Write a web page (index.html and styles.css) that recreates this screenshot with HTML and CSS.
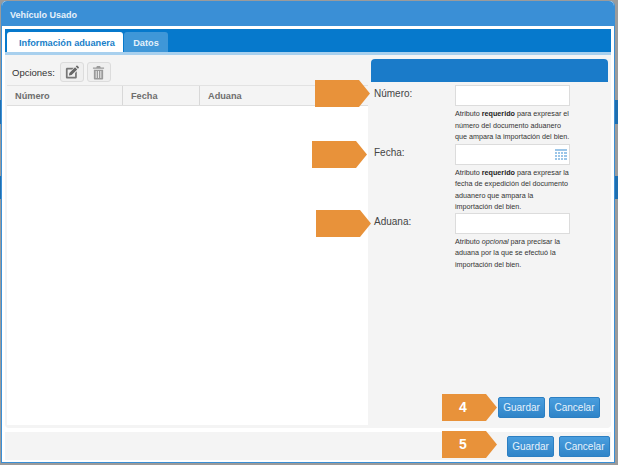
FILE: index.html
```html
<!DOCTYPE html>
<html lang="es">
<head>
<meta charset="utf-8">
<title>Vehículo Usado</title>
<link rel="stylesheet" href="styles.css">
</head>
<body>
<div class="modal">
  <header class="modal-head">Vehículo Usado</header>
  <div class="modal-body">
    <nav class="tabs">
      <span class="tab tab-on">Información aduanera</span>
      <span class="tab tab-off">Datos</span>
    </nav>
    <div class="tab-strip"></div>
    <div class="panel">
      <section class="left">
        <div class="tools">
          <span class="tools-label">Opciones:</span>
          <span class="tool-btn">
            <svg width="14" height="14" viewBox="0 0 16 16"><path fill="#777" d="M2.500 3H10L8 5H3v8.500h8.500V9l2-2v7c0 .8-.7 1.500-1.500 1.500H2.500C1.700 15.500 1 14.800 1 14V4.500C1 3.700 1.700 3 2.500 3z"/><path fill="#666" d="M5 9 11.500 2.500l2.500 2.500L7.500 11.500 4.500 12zM12.300 1.700l.9-.9c.3-.3.7-.3 1 0l1.500 1.500c.3.3.3.7 0 1l-.9.9z"/></svg>
          </span>
          <span class="tool-btn">
            <svg width="13" height="15" viewBox="0 0 14 16"><path fill="#9a9a9a" d="M1 2.500h3.600L5.300 1h3.400l.7 1.500H13V4H1zM2 5h10v9.600c0 .5-.4.9-.9.9H2.900c-.5 0-.9-.4-.9-.9zm2 1.500v7.500h1V6.500zm2.500 0v7.500h1V6.500zm2.500 0v7.500h1V6.500z"/></svg>
          </span>
        </div>
        <div class="grid-head">
          <span class="col col-num">Número</span>
          <span class="col col-date">Fecha</span>
          <span class="col col-cust">Aduana</span>
        </div>
        <div class="grid-body"></div>
      </section>
      <section class="right">
        <div class="form-head"></div>
        <div class="form-row row-num">
          <label class="form-label">Número:</label>
          <div class="form-field">
            <div class="input"></div>
            <p class="hint">Atributo <b>requerido</b> para expresar el<br>número del documento aduanero<br>que ampara la importación del bien.</p>
          </div>
        </div>
        <div class="form-row row-date">
          <label class="form-label">Fecha:</label>
          <div class="form-field">
            <div class="input input-date">
              <svg width="12" height="11" viewBox="0 0 12 11"><path fill="#9cc6e8" d="M0 0h12v2H0zM0 3h2v2H0zM3 3h2v2H3zM6 3h2v2H6zM9 3h3v2H9zM0 6h2v2H0zM3 6h2v2H3zM6 6h2v2H6zM9 6h3v2H9zM0 9h2v2H0zM3 9h2v2H3zM6 9h2v2H6zM9 9h3v2H9z"/></svg>
            </div>
            <p class="hint">Atributo <b>requerido</b> para expresar la<br>fecha de expedición del documento<br>aduanero que ampara la<br>importación del bien.</p>
          </div>
        </div>
        <div class="form-row row-cust">
          <label class="form-label">Aduana:</label>
          <div class="form-field">
            <div class="input"></div>
            <p class="hint">Atributo <i>opcional</i> para precisar la<br>aduana por la que se efectuó la<br>importación del bien.</p>
          </div>
        </div>
        <div class="actions">
          <button class="btn">Guardar</button>
          <button class="btn">Cancelar</button>
        </div>
      </section>
    </div>
    <footer class="foot">
      <button class="btn">Guardar</button>
      <button class="btn">Cancelar</button>
    </footer>
  </div>
  <span class="arrow a1"></span>
  <span class="arrow a2"></span>
  <span class="arrow a3"></span>
  <span class="arrow a4">4</span>
  <span class="arrow a5">5</span>
</div>
</body>
</html>
```
FILE: styles.css
```css
* { box-sizing: border-box; }
html, body { margin: 0; height: 100%; }
body {
  width: 618px;
  height: 465px;
  overflow: hidden;
  background: linear-gradient(#9b9b9b 100px, #1f6fb0 100px, #1f6fb0 124px, #9b9b9b 124px, #9b9b9b 176px, #1f6fb0 176px, #1f6fb0 199px, #9b9b9b 199px);
  font-family: "Liberation Sans", Arial, sans-serif;
  padding: 1px 3px 2px 1px;
}
.modal {
  position: relative;
  height: 462px;
  display: flex;
  flex-direction: column;
  background: #fff;
  border: 1px solid #3a8fd6;
  border-top: 0;
  border-radius: 5px 5px 0 0;
}
.modal-head {
  height: 25px;
  flex: none;
  background: #3a8fd6;
  color: #e6f1fa;
  font-size: 9px;
  font-weight: bold;
  line-height: 28px;
  padding-left: 8px;
  border-radius: 5px 5px 0 0;
}
.modal-body {
  flex: 1;
  display: flex;
  flex-direction: column;
  padding: 3px 3px 2px 3px;
  min-height: 0;
}
.tabs {
  height: 23px;
  flex: none;
  display: flex;
  gap: 1px;
  padding: 3px 0 0 2px;
  background: #0679cc;
}
.tab {
  font-size: 9.2px;
  font-weight: bold;
  line-height: 22px;
  border-radius: 3px 3px 0 0;
}
.tab-on {
  width: 116px;
  background: #fff;
  color: #1a7fc9;
  padding-left: 12px;
}
.tab-off {
  width: 44px;
  background: #3f97d8;
  color: #e4f1fa;
  text-align: center;
}
.tab-strip { height: 3px; flex: none; background: #a8d0ee; }
.panel {
  flex: 1;
  display: flex;
  min-height: 0;
  background: #f4f4f4;
  border-radius: 0 0 4px 4px;
}
.left {
  width: 363px;
  flex: none;
  display: flex;
  flex-direction: column;
  padding: 0 0 3px 2px;
}
.tools {
  height: 30px;
  flex: none;
  display: flex;
  align-items: center;
  gap: 3px;
  padding: 4px 0 0 5px;
  font-size: 9.5px;
  color: #333;
}
.tools-label { margin-right: 2px; }
.tool-btn {
  width: 24px;
  height: 20px;
  display: flex;
  align-items: center;
  justify-content: center;
  background: #efefef;
  border: 1px solid #dcdcdc;
  border-radius: 3px;
}
.grid-head {
  height: 21px;
  flex: none;
  display: flex;
  background: #f4f4f4;
  border-top: 1px solid #e2e2e2;
  border-bottom: 1px solid #dedede;
  font-size: 9.2px;
  font-weight: bold;
  color: #6e6e6e;
  line-height: 21px;
}
.col { padding-left: 8px; border-right: 1px solid #d8d8d8; }
.col-num { width: 116px; }
.col-date { width: 77px; }
.col-cust { flex: 1; border-right: 0; }
.grid-body { flex: 1; background: #fff; }
.right {
  flex: 1;
  display: flex;
  flex-direction: column;
  padding: 4px 3px 0 3px;
}
.form-head {
  height: 23px;
  flex: none;
  background: #1a7bc9;
  border-radius: 4px 4px 0 0;
}
.form-row { display: flex; flex: none; padding-left: 3px; }
.row-num { margin-top: 3px; }
.row-date { margin-top: 1px; }
.row-cust { margin-top: 0; }
.form-label {
  width: 81px;
  flex: none;
  font-size: 10px;
  line-height: 12px;
  color: #444;
  padding-top: 3px;
}
.form-field { width: 115px; flex: none; }
.input {
  height: 21px;
  background: #fff;
  border: 1px solid #dcdcdc;
  display: flex;
  align-items: center;
  justify-content: flex-end;
  padding-right: 2px;
}
.hint {
  margin: 2px 0 0;
  font-size: 7.2px;
  line-height: 11.5px;
  white-space: nowrap;
  color: #333;
}
.hint b { font-weight: bold; color: #222; }
.actions {
  margin-top: auto;
  display: flex;
  justify-content: flex-end;
  gap: 4px;
  padding: 0 8px 10px 0;
}
.btn {
  height: 21px;
  padding: 0;
  width: 47px;
  font-family: inherit;
  font-size: 10px;
  color: #e6f2fb;
  background: linear-gradient(#4a9ede, #2f84c8);
  border: 1px solid #2c7fc2;
  border-radius: 2px;
}
.btn + .btn { width: 51px; }
.foot {
  height: 28px;
  flex: none;
  margin-top: 4px;
  display: flex;
  justify-content: flex-end;
  align-items: center;
  gap: 5px;
  padding-right: 1px;
  background: #f4f4f4;
}
.arrow {
  position: absolute;
  height: 27px;
  background: #e8923a;
  clip-path: polygon(0 0, 80% 0, 100% 50%, 80% 100%, 0 100%);
  color: #fff;
  font-size: 14px;
  font-weight: bold;
  line-height: 27px;
  padding-left: 17px;
}
.a1 { left: 313px; top: 79px; width: 55px; }
.a2 { left: 310px; top: 140px; width: 55px; }
.a3 { left: 314px; top: 209px; width: 55px; }
.a4 { left: 440px; top: 393px; width: 55px; }
.a5 { left: 440px; top: 430px; width: 55px; }
```
